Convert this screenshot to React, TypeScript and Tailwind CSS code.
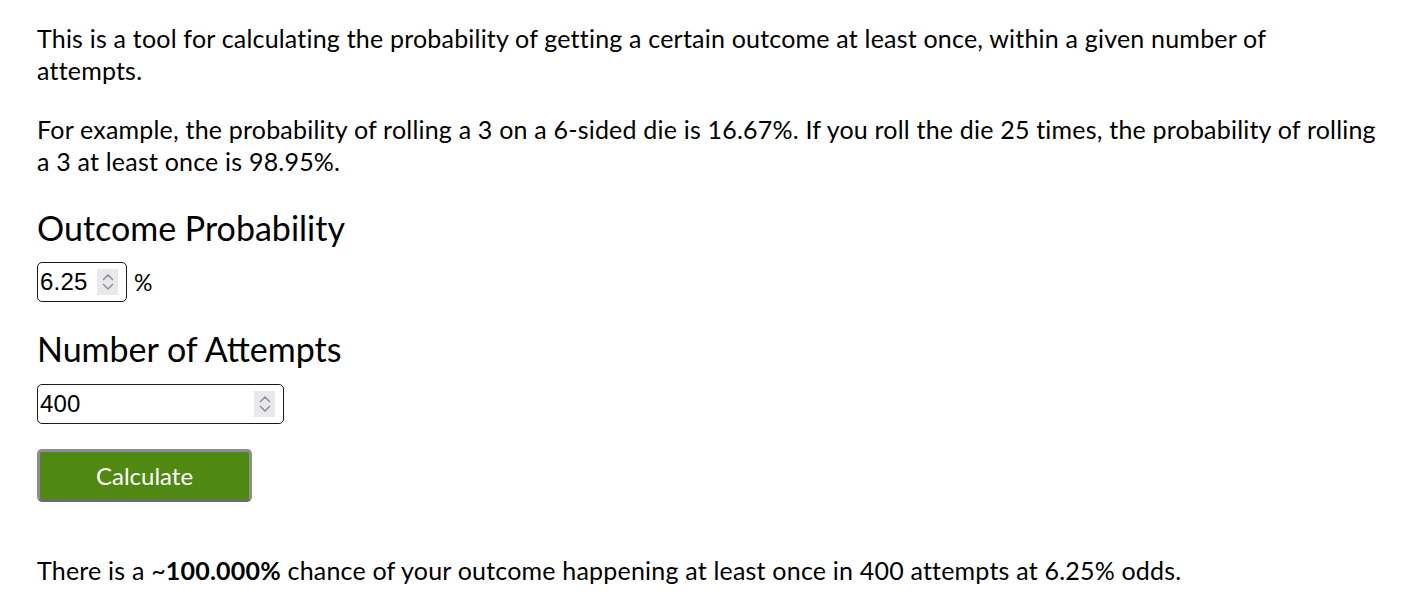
import { useState } from 'react'

function Spinner() {
  return (
    <span className="pointer-events-none absolute right-[9px] top-1/2 flex h-[26px] w-[21px] -translate-y-1/2 items-center justify-center bg-[#e9e9ed]">
      <svg width="14" height="22" viewBox="0 0 14 22" fill="none" stroke="#93939b" strokeWidth="1.7" strokeLinecap="round" strokeLinejoin="round">
        <path d="M2.5 8.5 L7 4 L11.5 8.5" />
        <path d="M2.5 13.5 L7 18 L11.5 13.5" />
      </svg>
    </span>
  )
}

function NumberBox({ value, onChange, width }: { value: string; onChange: (v: string) => void; width: string }) {
  return (
    <div className={`relative ${width}`}>
      <input
        type="text"
        value={value}
        onChange={(e) => onChange(e.target.value)}
        className="h-[40px] w-full rounded-[5px] border border-[#1a1a1a] bg-white pl-[2px] pr-[32px] text-[24px] text-black outline-none font-['Liberation_Sans',Arial,sans-serif]"
      />
      <Spinner />
    </div>
  )
}

export default function App() {
  const [prob, setProb] = useState('6.25')
  const [attempts, setAttempts] = useState('400')
  const [result, setResult] = useState({ pct: '100.000', n: '400', p: '6.25' })

  function calcular() {
    const p = parseFloat(prob) / 100
    const n = parseInt(attempts, 10)
    const r = (1 - Math.pow(1 - p, n)) * 100
    setResult({ pct: r.toFixed(3), n: String(n), p: prob })
  }

  return (
    <div className="min-h-screen bg-white text-black font-['Lato',sans-serif]">
      <div className="pl-[37px] pr-[40px] pt-[22px] text-[25px] leading-[32px] tracking-[0.2px]">
        <p>
          This is a tool for calculating the probability of getting a certain outcome at least once, within a given number of
          <br />
          attempts.
        </p>
        <p className="mt-[27px]">
          For example, the probability of rolling a 3 on a 6-sided die is 16.67%. If you roll the die 25 times, the probability of
          rolling a 3 at least once is 98.95%.
        </p>

        <h2 className="mt-[31px] text-[34px] leading-[40px] tracking-normal">Outcome Probability</h2>
        <div className="mt-[14px] flex items-center gap-[7px]">
          <NumberBox value={prob} onChange={setProb} width="w-[90px]" />
          <span className="text-[23px]">%</span>
        </div>

        <h2 className="mt-[27px] text-[34px] leading-[40px] tracking-normal">Number of Attempts</h2>
        <div className="mt-[15px]">
          <NumberBox value={attempts} onChange={setAttempts} width="w-[247px]" />
        </div>

        <button
          onClick={calcular}
          className="mt-[25px] flex h-[53px] w-[215px] items-center justify-center rounded-[5px] border-[3px] border-[#8d8d95] border-b-[#6b6b72] bg-[#4f8912] text-[24px] tracking-normal text-white"
        >
          Calculate
        </button>

        <p className="mt-[52px]">
          There is a ~<b>{result.pct}%</b> chance of your outcome happening at least once in {result.n} attempts at {result.p}% odds.
        </p>
      </div>
    </div>
  )
}
